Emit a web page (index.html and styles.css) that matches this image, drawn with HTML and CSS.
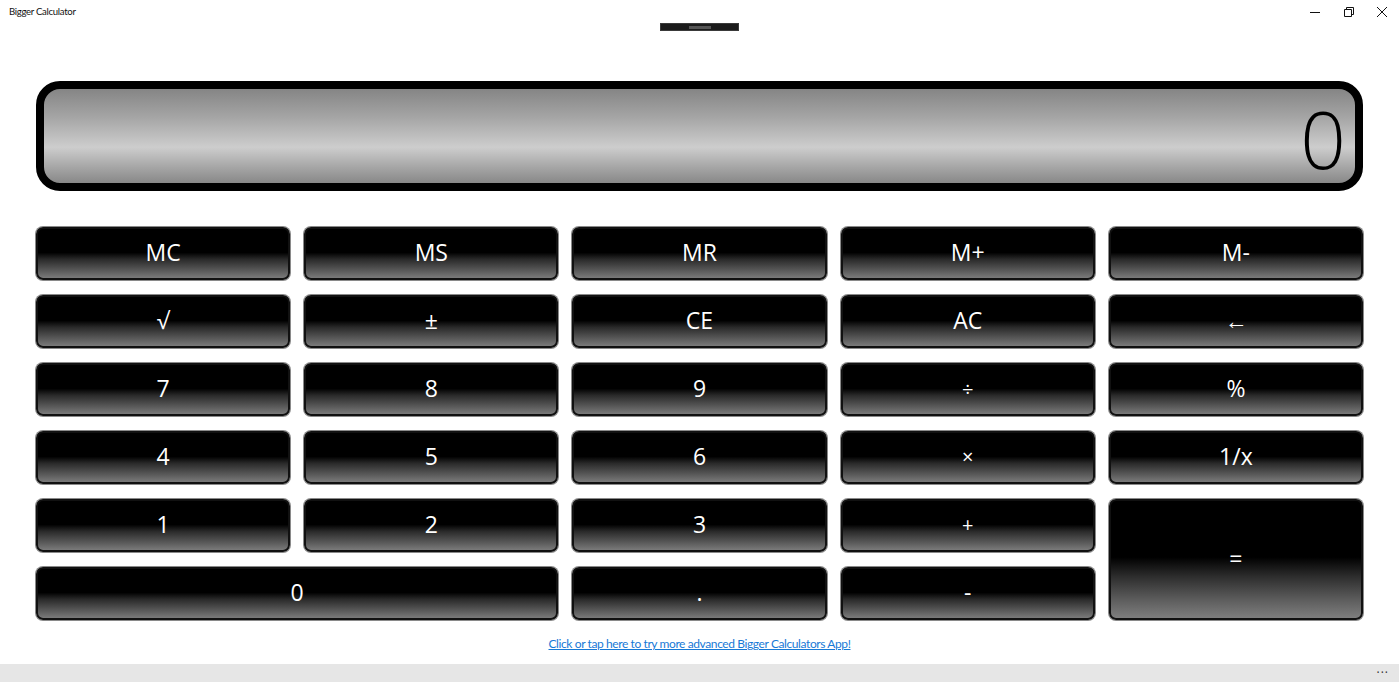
FILE: index.html
```html
<!DOCTYPE html>
<html>
<head>
<meta charset="utf-8">
<title>Bigger Calculator</title>
<link rel="stylesheet" href="styles.css">
</head>
<body>
<div class="app">
  <header class="titlebar">
    <span class="title">Bigger Calculator</span>
    <div class="controls">
      <span class="ctl"><svg width="10" height="10" viewBox="0 0 10 10"><path d="M0 5.5h10" stroke="#111" stroke-width="1"/></svg></span>
      <span class="ctl"><svg width="10" height="10" viewBox="0 0 10 10"><path d="M0.5 2.5h7v7h-7z M2.5 2.5v-2h7v7h-2" fill="none" stroke="#111" stroke-width="1"/></svg></span>
      <span class="ctl"><svg width="10" height="10" viewBox="0 0 10 10"><path d="M0 0L10 10M10 0L0 10" stroke="#111" stroke-width="1"/></svg></span>
    </div>
  </header>
  <div class="handle-row"><div class="handle"><span class="grip"></span></div></div>

  <div class="display"><span class="value">0</span></div>

  <div class="keys">
    <button class="key">MC</button>
    <button class="key">MS</button>
    <button class="key">MR</button>
    <button class="key">M+</button>
    <button class="key">M-</button>
    <button class="key">√</button>
    <button class="key">±</button>
    <button class="key">CE</button>
    <button class="key">AC</button>
    <button class="key">←</button>
    <button class="key">7</button>
    <button class="key">8</button>
    <button class="key">9</button>
    <button class="key small">÷</button>
    <button class="key">%</button>
    <button class="key">4</button>
    <button class="key">5</button>
    <button class="key">6</button>
    <button class="key small">×</button>
    <button class="key">1/x</button>
    <button class="key">1</button>
    <button class="key">2</button>
    <button class="key">3</button>
    <button class="key small">+</button>
    <button class="key equals">=</button>
    <button class="key zero">0</button>
    <button class="key">.</button>
    <button class="key">-</button>
  </div>

  <div class="link-row"><a class="promo" href="#">Click or tap here to try more advanced Bigger Calculators App!</a></div>

  <footer class="appbar"><span class="more">···</span></footer>
</div>
</body>
</html>
```

FILE: styles.css
```css
* { box-sizing: border-box; }
html, body { margin: 0; padding: 0; background: #fff; }
body {
  font-family: "Open Sans", "Noto Sans", "Liberation Sans", sans-serif;
  color: #000;
  width: 1399px;
  height: 682px;
  overflow: hidden;
}
.app { display: flex; flex-direction: column; height: 682px; }

.titlebar {
  height: 23px;
  display: flex;
  align-items: center;
  justify-content: space-between;
  padding-left: 9px;
}
.title { font-family: Lato, "Open Sans", sans-serif; font-size: 9.6px; letter-spacing: -0.3px; color: #111; line-height: 1; }
.controls { display: flex; height: 23px; align-items: center; }
.ctl {
  width: 33.5px;
  display: flex;
  justify-content: center;
  align-items: center;
}
.ctl svg { display: block; }

.handle-row {
  height: 58px;
  display: flex;
  justify-content: center;
  align-items: flex-start;
}
.handle {
  width: 79px;
  height: 8px;
  background: #1b1b1b;
  border: 1px solid #3a3a3a;
  display: flex;
  justify-content: center;
  align-items: center;
}
.grip { width: 22px; height: 3px; background: #555; }

.display {
  margin: 0 36px;
  height: 110px;
  border: 8px solid #000;
  border-radius: 24px;
  background: linear-gradient(to bottom, #858585 0%, #a5a5a5 30%, #cdcdcd 62%, #a8a8a8 82%, #888 100%);
  display: flex;
  justify-content: flex-end;
  align-items: center;
  padding-right: 9px;
}
.value {
  font-family: "Open Sans", "Noto Sans", sans-serif;
  font-size: 80px;
  line-height: 1;
  font-weight: 300;
  color: #000;
  margin-top: 4px;
}

.keys {
  margin: 36px 36px 0 36px;
  display: grid;
  grid-template-columns: repeat(5, 1fr);
  grid-template-rows: repeat(6, 53px);
  column-gap: 14px;
  row-gap: 15px;
}
.key {
  font-family: "Open Sans", "Noto Sans", sans-serif;
  font-size: 23px;
  color: #fff;
  border: 2px solid #111;
  border-radius: 7px;
  background: linear-gradient(to bottom, #000 0%, #000 48%, #2a2a2a 62%, #5a5a5a 85%, #7a7a7a 100%);
  box-shadow: 0 0 0 1px #8a8a8a;
  padding: 0 0 2px 0;
  display: flex;
  justify-content: center;
  align-items: center;
  line-height: 1;
  cursor: pointer;
}
.key.small { font-size: 20px; }
.key.equals {
  grid-column: 5;
  grid-row: 5 / span 2;
  background: linear-gradient(to bottom, #000 0%, #000 48%, #2e2e2e 65%, #5e5e5e 85%, #7e7e7e 100%);
}
.key.zero { grid-column: 1 / span 2; }

.link-row {
  margin-top: 14px;
  height: 17px;
  text-align: center;
  line-height: 17px;
}
.promo {
  font-family: Lato, "Open Sans", sans-serif;
  font-size: 12px;
  letter-spacing: -0.4px;
  color: #1779d6;
  text-decoration: underline;
}

.appbar {
  margin-top: auto;
  height: 18px;
  background: #e6e6e6;
  display: flex;
  justify-content: flex-end;
  align-items: center;
  padding-right: 10px;
}
.more { font-size: 12px; color: #333; letter-spacing: 1px; line-height: 1; }
```
